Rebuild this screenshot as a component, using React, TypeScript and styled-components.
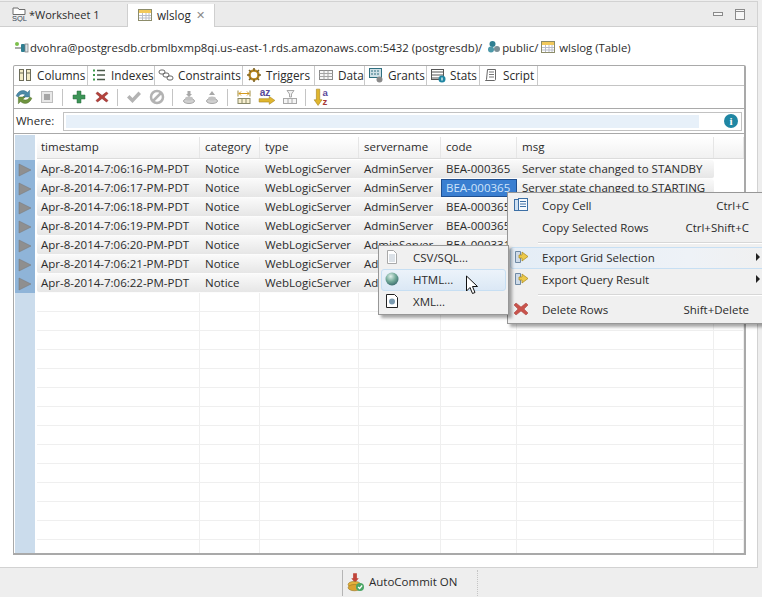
import React, { FC, ReactNode } from 'react';
import styled, { createGlobalStyle } from 'styled-components';

const GlobalStyle = createGlobalStyle`
  html, body {
    margin: 0;
    padding: 0;
    width: 762px;
    height: 597px;
    overflow: hidden;
    background: #eeeeee;
    font-family: "Open Sans", "Noto Sans", sans-serif;
    font-size: 11.5px;
    color: #2b2b2b;
  }
`;

const Page = styled.div`
  position: relative;
  width: 762px;
  height: 597px;
  overflow: hidden;
  display: flex;
  flex-direction: column;
`;

const Editor = styled.div`
  flex: 1;
  min-height: 0;
  display: flex;
  flex-direction: column;
  margin: 1px 4px 0 0;
  border: 1px solid #d2d2d2;
  border-left: none;
  background: #fff;
`;

const EditorTabs = styled.div`
  height: 24px;
  flex: none;
  display: flex;
  align-items: stretch;
  background: #ebebeb;
  border-bottom: 1px solid #cfcfcf;
  padding-left: 1px;
`;

const EditorTab = styled.div<{ $active?: boolean }>`
  width: ${({ $active }) => ($active ? '88px' : '126px')};
  margin-top: 2px;
  margin-bottom: ${({ $active }) => ($active ? '-1px' : '0')};
  display: flex;
  align-items: center;
  gap: ${({ $active }) => ($active ? '4px' : '2px')};
  padding: 0 0 2px 9px;
  box-sizing: border-box;
  background: ${({ $active }) => ($active ? '#ffffff' : 'transparent')};
  border-right: 1px solid ${({ $active }) => ($active ? '#cfcfcf' : 'transparent')};
  border-left: 1px solid ${({ $active }) => ($active ? '#cfcfcf' : 'transparent')};
  font-size: ${({ $active }) => ($active ? '11.7px' : '11px')};
`;

const CloseMark = styled.span`
  color: #8a8a8a;
  font-size: 11px;
  margin-left: 1px;
`;

const WindowButtons = styled.div`
  margin-left: auto;
  display: flex;
  align-items: center;
  gap: 12px;
  padding-right: 12px;
`;

const Breadcrumb = styled.div`
  height: 38px;
  flex: none;
  display: flex;
  align-items: center;
  padding: 2px 0 0 14px;
  box-sizing: border-box;
  white-space: nowrap;
  font-size: 11.35px;
`;

const CrumbIcon = styled.span<{ $before: number; $after: number }>`
  display: inline-flex;
  margin: 0 ${({ $after }) => $after}px 0 ${({ $before }) => $before}px;
`;

const Body = styled.div`
  flex: 1;
  min-height: 0;
  margin: 0 11px 12px 13px;
  border: 1px solid #a9a9a9;
  border-bottom-width: 2px;
  border-right-width: 2px;
  border-radius: 2px 2px 0 0;
  display: flex;
  flex-direction: column;
`;

const SubTabs = styled.div`
  height: 19px;
  flex: none;
  display: flex;
  border-bottom: 1px solid #c4c4c4;
`;

const SubTab = styled.div<{ $w: number }>`
  width: ${({ $w }) => $w}px;
  box-sizing: border-box;
  display: flex;
  align-items: center;
  gap: 4px;
  padding: 0 0 2px 3px;
  border-right: 1px solid #c9c9c9;
  white-space: nowrap;
  font-size: 11.75px;
`;

const Toolbar = styled.div`
  height: 22px;
  flex: none;
  display: flex;
  align-items: center;
  border-bottom: 1px solid #a9a9a9;
`;

const ToolSlot = styled.span`
  width: 23px;
  display: inline-flex;
  justify-content: center;

  &:first-child {
    margin-left: -2px;
  }
`;

const ToolSep = styled.span`
  width: 1px;
  height: 17px;
  background: #c4c4c4;
  margin: 0 4px;
`;

const WhereRow = styled.div`
  height: 24px;
  flex: none;
  display: flex;
  align-items: center;
  padding: 0 2px;
  border-bottom: 1px solid #a9a9a9;
`;

const WhereLabel = styled.span`
  width: 47px;
  flex: none;
  padding-bottom: 2px;
`;

const WhereInput = styled.div`
  flex: 1;
  height: 19px;
  box-sizing: border-box;
  border: 1px solid #c2c2c2;
  padding: 2px 3px 2px 2px;
  display: flex;
  align-items: center;
`;

const WhereFill = styled.div`
  width: 633px;
  height: 100%;
  background: #e7f0f9;
`;

const InfoBadge = styled.span`
  margin-left: auto;
  width: 14px;
  height: 14px;
  flex: none;
  border-radius: 50%;
  background: #1f86a3;
  color: #fff;
  font: bold 11px/14px "Liberation Serif", serif;
  text-align: center;
`;

const Grid = styled.div`
  flex: 1;
  min-height: 0;
  overflow: hidden;
  padding: 1px 0 0 1px;
  display: flex;
`;

const RowHeaders = styled.div`
  width: 20px;
  flex: none;
  background: #cbdcec;
  display: flex;
  flex-direction: column;
`;

const CornerCell = styled.div`
  height: 25px;
  flex: none;
`;

const MarkerCell = styled.div`
  height: 19px;
  flex: none;
  background: #8fb4d8;
  display: flex;
  align-items: center;
  justify-content: center;
`;

const Columns = styled.div`
  flex: 1;
  min-width: 0;
  display: flex;
  flex-direction: column;
  padding: 2px 0 0 2px;
`;

const tracks = '163px 60px 99px 82px 76px 197px 1fr';

const HeaderRow = styled.div`
  height: 22px;
  margin-bottom: 1px;
  flex: none;
  display: grid;
  grid-template-columns: ${tracks};
  background: linear-gradient(#ffffff, #f1f1f1);
  border-bottom: 1px solid #dcdcdc;
  box-sizing: border-box;
`;

const HeaderCell = styled.div`
  display: flex;
  align-items: center;
  padding: 0 0 2px 5px;
  border-right: 1px solid #e6e6e6;

  &:first-child {
    padding-left: 4px;
  }
`;

const DataRow = styled.div`
  height: 19px;
  flex: none;
  display: grid;
  grid-template-columns: ${tracks};
  box-sizing: border-box;
`;

const DataCell = styled.div<{ $selected?: boolean; $filled?: boolean }>`
  display: flex;
  align-items: center;
  padding: 0 0 2px 5px;
  white-space: nowrap;
  overflow: hidden;
  ${({ $filled }) =>
    $filled
      ? `
    background: linear-gradient(#fafafa, #e6e6e6);
    border-bottom: 1px solid #fcfcfc;
    &:first-child { border-radius: 3px 0 0 3px; padding-left: 4px; }
    &:last-child { border-radius: 0 3px 3px 0; }
  `
      : `
    border-right: 1px solid #efefef;
    border-bottom: 1px solid #efefef;
  `}
  ${({ $selected }) =>
    $selected &&
    `
    background: #3a7fd1;
    color: #cfe4fa;
    box-shadow: inset 0 0 0 1px #1f4f8f;
  `}
`;

const Status = styled.div`
  height: 29px;
  flex: none;
  background: #eeeeee;
  display: flex;
  align-items: center;
  padding-left: 342px;
`;

const StatusItem = styled.div`
  width: 136px;
  height: 26px;
  box-sizing: border-box;
  display: flex;
  align-items: center;
  gap: 4px;
  padding: 0 0 2px 2px;
  border-left: 1px solid #b5b5b5;
  border-right: 1px dotted #c5c5c5;
`;

const Menu = styled.div<{ $x: number; $y: number; $w: number; $tight?: boolean }>`
  position: absolute;
  left: ${({ $x }) => $x}px;
  top: ${({ $y }) => $y}px;
  width: ${({ $w }) => $w}px;
  box-sizing: border-box;
  background: #f0f0f0;
  border: 1px solid #979797;
  box-shadow: 3px 3px 3px rgba(0, 0, 0, 0.35);
  padding: ${({ $tight }) => ($tight ? '1px 2px' : '2px')};
`;

const MenuRow = styled.div<{ $active?: 'soft' | 'strong' }>`
  height: 22px;
  display: flex;
  align-items: center;
  padding-bottom: 2px;
  border-radius: 3px;
  white-space: nowrap;
  box-sizing: border-box;
  border: 1px solid ${({ $active }) => ($active ? '#c7dff3' : 'transparent')};
  background: ${({ $active }) =>
    $active === 'strong'
      ? 'linear-gradient(#ecf3fa, #dbe8f5)'
      : $active === 'soft'
        ? 'linear-gradient(to right, #e4edf6, #eef2f7 70%, #f0f0f0)'
        : 'transparent'};
`;

const MenuIconSlot = styled.span`
  width: 31px;
  flex: none;
  box-sizing: border-box;
  padding-left: 2px;
  display: inline-flex;
`;

const Shortcut = styled.span`
  margin-left: auto;
  padding-right: 16px;
`;

const SubArrow = styled.span`
  margin-left: auto;
  margin-right: 5px;
  width: 0;
  height: 0;
  border-left: 4px solid #222;
  border-top: 4px solid transparent;
  border-bottom: 4px solid transparent;
`;

const MenuSep = styled.div`
  height: 1px;
  margin: 3px 0 3px 28px;
  background: #d7d7d7;
  border-bottom: 1px solid #fff;
`;

const Cursor = styled.svg`
  position: absolute;
  left: 465px;
  top: 275px;
`;

const Ico: FC<{ children: ReactNode; s?: number }> = ({ children, s = 16 }) => (
  <svg width={s} height={s} viewBox="0 0 16 16" style={{ flex: 'none' }}>
    {children}
  </svg>
);

const TableIcon = () => (
  <Ico>
    <rect x="1.5" y="2.5" width="13" height="11" fill="#fff" stroke="#8c8c6a" />
    <rect x="2" y="3" width="12" height="3" fill="#f2c95c" />
    <path d="M2 8.5h12M2 11h12M5.5 6v7M9 6v7M12 6v7" stroke="#b9bdc9" />
  </Ico>
);

const SqlIcon = () => (
  <Ico>
    <path d="M2 2h5l1 1.5h6v5H2z" fill="#fff" stroke="#6d6d6d" />
    <text x="1" y="15" fontSize="7.5" fontFamily="Liberation Sans" fill="#3a4a5a">SQL</text>
  </Ico>
);

const ConnIcon = () => (
  <Ico>
    <circle cx="3" cy="5" r="2" fill="#7cc04b" />
    <path d="M1 9h6" stroke="#555" />
    <rect x="7" y="5" width="4" height="8" rx="1" fill="#2f7f92" />
    <rect x="11" y="5" width="3" height="8" fill="#d7e3e8" stroke="#777" strokeWidth="0.7" />
  </Ico>
);

const SchemaIcon = () => (
  <Ico>
    <circle cx="6.5" cy="5" r="3" fill="#2f7f92" />
    <circle cx="5" cy="10.5" r="3" fill="#4c98a8" />
    <circle cx="11" cy="10" r="3" fill="#7b8f96" />
  </Ico>
);

const ColumnsIcon = () => (
  <Ico>
    <rect x="2.5" y="2.5" width="4" height="11" fill="#f4ecc6" stroke="#6d6d5a" />
    <rect x="9.5" y="2.5" width="4" height="11" fill="#f4ecc6" stroke="#6d6d5a" />
    <path d="M2.5 6h4M9.5 6h4" stroke="#6d6d5a" />
  </Ico>
);

const IndexesIcon = () => (
  <Ico>
    <path d="M6 3.5h8M6 8h8M6 12.5h8" stroke="#4a5a4a" strokeWidth="1.5" />
    <path d="M2 3.500h2M2 8h2M2 12.5h2" stroke="#3c9a4a" strokeWidth="2" />
  </Ico>
);

const ConstraintsIcon = () => (
  <Ico>
    <rect x="1" y="3" width="6" height="4" rx="2" fill="none" stroke="#666" />
    <rect x="5" y="6" width="6" height="4" rx="2" fill="none" stroke="#666" />
    <rect x="9" y="9" width="6" height="4" rx="2" fill="none" stroke="#666" />
  </Ico>
);

const GearIcon = () => (
  <Ico>
    <circle cx="8" cy="8" r="4.5" fill="none" stroke="#b9861e" strokeWidth="2.5" />
    <path d="M8 1v3M8 12v3M1 8h3M12 8h3M3 3l2 2M11 11l2 2M13 3l-2 2M5 11l-2 2" stroke="#7d6426" strokeWidth="1.6" />
  </Ico>
);

const DataIcon = () => (
  <Ico>
    <rect x="1.5" y="3.5" width="13" height="9" fill="#f7f7f7" stroke="#8a8a8a" />
    <path d="M1.5 6.5h13M1.5 9.5h13M6 3.5v9M10 3.5v9" stroke="#a5a5a5" />
  </Ico>
);

const GrantsIcon = () => (
  <Ico>
    <rect x="1.5" y="1.5" width="12" height="9" fill="#cfe0e6" stroke="#2f6f80" />
    <path d="M3 4h9M3 7h9" stroke="#2f6f80" strokeDasharray="2 1" />
    <circle cx="11.5" cy="12.5" r="3" fill="#8a8a8a" />
  </Ico>
);

const StatsIcon = () => (
  <Ico>
    <rect x="1.5" y="2.5" width="12" height="10" fill="#fff" stroke="#555" />
    <path d="M2 5h11M2 8h11M2 11h8" stroke="#555" strokeWidth="1.2" />
    <circle cx="12" cy="12" r="3.5" fill="#1f86a3" />
    <path d="M12 10.5v3" stroke="#fff" strokeWidth="1.2" />
  </Ico>
);

const ScriptIcon = () => (
  <Ico>
    <path d="M4.5 2.5h8v10c0 1-1 1-1 1h-9c1 0 1-1 1-1z" fill="#fff" stroke="#666" />
    <path d="M6 5h5M6 7.5h5M6 10h5" stroke="#777" />
  </Ico>
);

const RefreshIcon = () => (
  <Ico s={18}>
    <path d="M1 7c2-5 7-6 10-3l2-2v6H7l2-2C7 4.500 4 5.500 3 8z" fill="#4c8aa8" stroke="#2f6680" strokeWidth="0.4" />
    <path d="M15 9c-2 5-7 6-10 3l-2 2V8h6l-2 2c2 1.500 5 .5 6-2z" fill="#6f9440" stroke="#4d6c28" strokeWidth="0.4" />
  </Ico>
);

const StopIcon = () => (
  <Ico>
    <rect x="2.5" y="2.5" width="11" height="11" fill="#e8e8e8" stroke="#bdbdbd" />
    <rect x="5" y="5" width="6" height="6" fill="#a5a5a5" />
  </Ico>
);

const PlusIcon = () => (
  <Ico>
    <path d="M6 2h4v4h4v4h-4v4H6v-4H2V6h4z" fill="#3d9457" stroke="#2b6b3e" strokeWidth="0.5" />
  </Ico>
);

const CrossIcon = () => (
  <Ico>
    <path d="M3.5 3L8 6.5 12.5 3l1.5 1.5L10 8l4 3.5-1.5 1.5L8 9.5 3.5 13 2 11.5 6 8 2 4.5z" fill="#b5413c" stroke="#8d2d2a" strokeWidth="0.6" />
  </Ico>
);

const CheckIcon = () => (
  <Ico>
    <path d="M1 8.5l2.500-2.500 3 3 6-6.500 2.500 2.500-8.500 9z" fill="#b3b3b3" />
  </Ico>
);

const BlockedIcon = () => (
  <Ico>
    <circle cx="8" cy="8" r="6" fill="none" stroke="#b3b3b3" strokeWidth="2.5" />
    <path d="M4 12l8-8" stroke="#b3b3b3" strokeWidth="2.5" />
  </Ico>
);

const DiskIcon: FC<{ up?: boolean }> = ({ up }) => (
  <Ico>
    <ellipse cx="8" cy="12" rx="5.5" ry="2.5" fill="#d0d0d0" stroke="#a8a8a8" />
    <ellipse cx="8" cy="9.5" rx="4" ry="2" fill="#c2c2c2" />
    <path d={up ? 'M8 2l3 4H5z' : 'M6.5 2h3v3H11L8 8 5 5h1.5z'} fill="#a8a8a8" />
  </Ico>
);

const FitIcon = () => (
  <Ico>
    <path d="M2 1.5v6M14 1.5v6" stroke="#a08c3c" />
    <path d="M3 4.5h10M5 2.5l-2 2 2 2M11 2.5l2 2-2 2" fill="none" stroke="#d39a1f" />
    <rect x="2" y="9.5" width="12" height="5" fill="#f7efcf" stroke="#8a8a6a" />
    <path d="M6 9.5v5M10 9.5v5" stroke="#8a8a6a" />
  </Ico>
);

const SortRightIcon = () => (
  <Ico s={18}>
    <text x="1.5" y="7" fontSize="9" fontWeight="bold" fontFamily="Liberation Sans" fill="#5b4a9a">az</text>
    <path d="M1 9.5h9V7.5l5 3.5-5 3.5v-2H1z" fill="#e0b62e" stroke="#a07d17" strokeWidth="0.5" />
  </Ico>
);

const FilterIcon = () => (
  <Ico>
    <path d="M5 1.5h7L9.5 5v3h-2V5z" fill="#f0f0f0" stroke="#a8a8a8" />
    <rect x="1.5" y="9.5" width="13" height="5" fill="#f5f5f5" stroke="#a8a8a8" />
    <path d="M6 9.5v5M10 9.5v5" stroke="#a8a8a8" />
  </Ico>
);

const SortDownIcon = () => (
  <Ico s={18}>
    <path d="M3 1h3v9.5h2L4.5 15.5 1 10.5h2z" fill="#e0b62e" stroke="#a07d17" strokeWidth="0.5" />
    <text x="8.5" y="7.5" fontSize="8.5" fontWeight="bold" fontFamily="Liberation Sans" fill="#5b4a9a">a</text>
    <text x="8.5" y="15" fontSize="8.5" fontWeight="bold" fontFamily="Liberation Sans" fill="#a83a33">z</text>
  </Ico>
);

const CopyIcon = () => (
  <Ico>
    <rect x="1.5" y="2.5" width="8" height="11" fill="#cfe0f2" stroke="#3c6fa5" />
    <rect x="5.5" y="1.5" width="9" height="12" fill="#f5f9fd" stroke="#3c6fa5" />
    <path d="M7 4.5h6M7 7h6M7 9.5h6" stroke="#3c6fa5" />
  </Ico>
);

const ExportIcon = () => (
  <Ico>
    <path d="M2.5 2.500h5v11h-5z" fill="#cfdbe8" stroke="#6f8aa5" />
    <path d="M6 6h3V3l6 4.5-6 4.5V9H6z" fill="#ecc94b" stroke="#a8861c" strokeWidth="0.7" />
  </Ico>
);

const BigCrossIcon = () => (
  <Ico>
    <path d="M3 2l5 4 5-4 2 2-4 4 4 4-2 2-5-4-5 4-2-2 4-4-4-4z" fill="#c9534c" stroke="#a23c36" strokeWidth="0.5" />
  </Ico>
);

const PageIcon = () => (
  <Ico>
    <path d="M3.5 1.5h6l3 3v10h-9z" fill="#fff" stroke="#a9a9a9" />
    <path d="M5 6h6M5 8h6M5 10h6M5 12h6" stroke="#b8c4d0" />
  </Ico>
);

const GlobeIcon = () => (
  <svg width="16" height="16" viewBox="0 0 16 16">
    <defs>
      <radialGradient id="globe" cx="0.4" cy="0.3" r="0.8">
        <stop offset="0" stopColor="#dff0ea" />
        <stop offset="0.5" stopColor="#71a897" />
        <stop offset="1" stopColor="#2f5f66" />
      </radialGradient>
    </defs>
    <circle cx="8" cy="8" r="6.5" fill="url(#globe)" />
  </svg>
);

const XmlPageIcon = () => (
  <Ico>
    <path d="M2.5 1.5h8l3 3v10h-11z" fill="#fff" stroke="#222" />
    <circle cx="8" cy="8.5" r="3" fill="#7a9ab0" />
  </Ico>
);

const CommitIcon = () => (
  <Ico s={20}>
    <path d="M6.5 1h3v4H11L8 8.5 5 5h1.5z" fill="#c0443a" />
    <ellipse cx="7.5" cy="10" rx="5" ry="2.5" fill="#e3b23c" stroke="#9a7720" strokeWidth="0.5" />
    <ellipse cx="7.5" cy="12.5" rx="5" ry="2.5" fill="#d9a22f" stroke="#9a7720" strokeWidth="0.5" />
    <circle cx="12" cy="12" r="3.2" fill="#4aa564" />
    <path d="M10.5 12l1.2 1.2 2-2.4" fill="none" stroke="#fff" />
  </Ico>
);

const subTabs: { label: string; w: number; icon: ReactNode }[] = [
  { label: 'Columns', w: 74, icon: <ColumnsIcon /> },
  { label: 'Indexes', w: 67, icon: <IndexesIcon /> },
  { label: 'Constraints', w: 88, icon: <ConstraintsIcon /> },
  { label: 'Triggers', w: 72, icon: <GearIcon /> },
  { label: 'Data', w: 50, icon: <DataIcon /> },
  { label: 'Grants', w: 62, icon: <GrantsIcon /> },
  { label: 'Stats', w: 53, icon: <StatsIcon /> },
  { label: 'Script', w: 58, icon: <ScriptIcon /> },
];

const headers = ['timestamp', 'category', 'type', 'servername', 'code', 'msg', ''];

const rows = [
  ['16', 'BEA-000365', 'Server state changed to STANDBY'],
  ['17', 'BEA-000365', 'Server state changed to STARTING'],
  ['18', 'BEA-000365', 'Server state changed to ADMIN'],
  ['19', 'BEA-000365', 'Server state changed to RESUMING'],
  ['20', 'BEA-000331', 'Started WebLogic AdminServer'],
  ['21', 'BEA-000365', 'Server state changed to RUNNING'],
  ['22', 'BEA-000360', 'Server started in RUNNING mode'],
];

const EMPTY_ROWS = 14;

const App: FC = () => (
  <Page>
    <GlobalStyle />
    <Editor>
      <EditorTabs>
        <EditorTab>
          <SqlIcon />
          *Worksheet 1
        </EditorTab>
        <EditorTab $active>
          <TableIcon />
          wlslog
          <CloseMark>✕</CloseMark>
        </EditorTab>
        <WindowButtons>
          <svg width="10" height="4" viewBox="0 0 10 4">
            <rect x="0.5" y="0.5" width="9" height="3" fill="#f6f6f6" stroke="#8a8a8a" />
          </svg>
          <svg width="10" height="11" viewBox="0 0 10 11">
            <rect x="0.5" y="0.5" width="9" height="10" fill="#f6f6f6" stroke="#8a8a8a" />
            <path d="M0 2.5h10" stroke="#8a8a8a" />
          </svg>
        </WindowButtons>
      </EditorTabs>

      <Breadcrumb>
        <ConnIcon />
        dvohra@postgresdb.crbmlbxmp8qi.us-east-1.rds.amazonaws.com:5432 (postgresdb)/
        <CrumbIcon $before={4} $after={0}>
          <SchemaIcon />
        </CrumbIcon>
        public/
        <CrumbIcon $before={2} $after={3}>
          <TableIcon />
        </CrumbIcon>
        wlslog (Table)
      </Breadcrumb>

      <Body>
        <SubTabs>
          {subTabs.map((tab) => (
            <SubTab key={tab.label} $w={tab.w}>
              {tab.icon}
              {tab.label}
            </SubTab>
          ))}
        </SubTabs>

        <Toolbar>
          <ToolSlot><RefreshIcon /></ToolSlot>
          <ToolSlot><StopIcon /></ToolSlot>
          <ToolSep />
          <ToolSlot><PlusIcon /></ToolSlot>
          <ToolSlot><CrossIcon /></ToolSlot>
          <ToolSep />
          <ToolSlot><CheckIcon /></ToolSlot>
          <ToolSlot><BlockedIcon /></ToolSlot>
          <ToolSep />
          <ToolSlot><DiskIcon /></ToolSlot>
          <ToolSlot><DiskIcon up /></ToolSlot>
          <ToolSep />
          <ToolSlot><FitIcon /></ToolSlot>
          <ToolSlot><SortRightIcon /></ToolSlot>
          <ToolSlot><FilterIcon /></ToolSlot>
          <ToolSep />
          <ToolSlot><SortDownIcon /></ToolSlot>
        </Toolbar>

        <WhereRow>
          <WhereLabel>Where:</WhereLabel>
          <WhereInput>
            <WhereFill />
            <InfoBadge>i</InfoBadge>
          </WhereInput>
        </WhereRow>

        <Grid>
          <RowHeaders>
            <CornerCell />
            {rows.map(([sec]) => (
              <MarkerCell key={sec}>
                <svg width="14" height="14" viewBox="0 0 14 14">
                  <path d="M1 1l12 6-12 6z" fill="#8f8f8f" stroke="#777" strokeWidth="0.5" />
                </svg>
              </MarkerCell>
            ))}
          </RowHeaders>
          <Columns>
            <HeaderRow>
              {headers.map((h) => (
                <HeaderCell key={h || 'filler'}>{h}</HeaderCell>
              ))}
            </HeaderRow>
            {rows.map(([sec, code, msg], i) => (
              <DataRow key={sec}>
                <DataCell $filled>{`Apr-8-2014-7:06:${sec}-PM-PDT`}</DataCell>
                <DataCell $filled>Notice</DataCell>
                <DataCell $filled>WebLogicServer</DataCell>
                <DataCell $filled>AdminServer</DataCell>
                <DataCell $filled $selected={i === 1}>{code}</DataCell>
                <DataCell $filled>{msg}</DataCell>
              </DataRow>
            ))}
            {Array.from({ length: EMPTY_ROWS }, (_, i) => (
              <DataRow key={i}>
                {headers.map((h) => (
                  <DataCell key={h || 'filler'} />
                ))}
              </DataRow>
            ))}
          </Columns>
        </Grid>
      </Body>
    </Editor>

    <Status>
      <StatusItem>
        <CommitIcon />
        AutoCommit ON
      </StatusItem>
    </Status>

    <Menu $x={507} $y={192} $w={262}>
      <MenuRow>
        <MenuIconSlot><CopyIcon /></MenuIconSlot>
        Copy Cell
        <Shortcut>Ctrl+C</Shortcut>
      </MenuRow>
      <MenuRow>
        <MenuIconSlot />
        Copy Selected Rows
        <Shortcut>Ctrl+Shift+C</Shortcut>
      </MenuRow>
      <MenuSep />
      <MenuRow $active="soft">
        <MenuIconSlot><ExportIcon /></MenuIconSlot>
        Export Grid Selection
        <SubArrow />
      </MenuRow>
      <MenuRow>
        <MenuIconSlot><ExportIcon /></MenuIconSlot>
        Export Query Result
        <SubArrow />
      </MenuRow>
      <MenuSep />
      <MenuRow>
        <MenuIconSlot><BigCrossIcon /></MenuIconSlot>
        Delete Rows
        <Shortcut>Shift+Delete</Shortcut>
      </MenuRow>
    </Menu>

    <Menu $x={378} $y={245} $w={131} $tight>
      <MenuRow>
        <MenuIconSlot><PageIcon /></MenuIconSlot>
        CSV/SQL...
      </MenuRow>
      <MenuRow $active="strong">
        <MenuIconSlot><GlobeIcon /></MenuIconSlot>
        HTML...
      </MenuRow>
      <MenuRow>
        <MenuIconSlot><XmlPageIcon /></MenuIconSlot>
        XML...
      </MenuRow>
    </Menu>

    <Cursor width="14" height="21" viewBox="0 0 14 21">
      <path d="M1.5 1v15l3.5-3.500 2.500 6 2.500-1-2.500-6h5z" fill="#fff" stroke="#111" />
    </Cursor>
  </Page>
);

export default App;
